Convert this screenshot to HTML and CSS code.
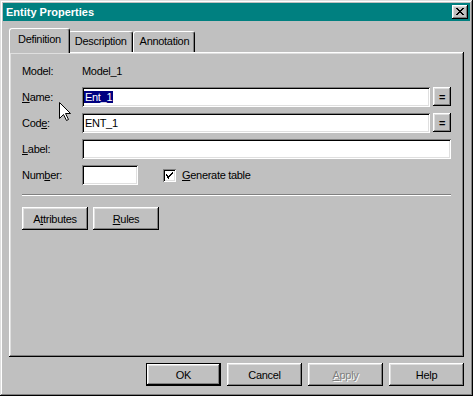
FILE: index.html
```html
<!DOCTYPE html>
<html lang="en">
<head>
  <meta charset="UTF-8" />
  <title>Entity Properties</title>
  <link rel="stylesheet" href="styles.css">
</head>
<body>
  <div class="window">
    <div class="titlebar">
      <span class="title">Entity Properties</span>
      <div class="close-btn">
        <svg width="8" height="7" viewBox="0 0 8 7" shape-rendering="crispEdges">
          <path d="M0 0h2v1h-2zM6 0h2v1h-2zM1 1h2v1h-2zM5 1h2v1h-2zM2 2h4v1h-4zM3 3h2v1h-2zM2 4h4v1h-4zM1 5h2v1h-2zM5 5h2v1h-2zM0 6h2v1h-2zM6 6h2v1h-2z" fill="#000"/>
        </svg>
      </div>
    </div>

    <div class="content">
      <div class="tabs">
        <div class="tab active">Definition</div>
        <div class="tab">Description</div>
        <div class="tab">Annotation</div>
      </div>

      <div class="panel">
        <div class="form">
          <div class="row model-row">
            <span class="label">Model:</span>
            <span class="value">Model_1</span>
          </div>
          <div class="row">
            <span class="label"><u>N</u>ame:</span>
            <div class="field grow"><span class="sel">Ent_1</span></div>
            <button class="btn eq">=</button>
          </div>
          <div class="row">
            <span class="label">Cod<u>e</u>:</span>
            <div class="field grow">ENT_1</div>
            <button class="btn eq">=</button>
          </div>
          <div class="row">
            <span class="label"><u>L</u>abel:</span>
            <div class="field grow"></div>
          </div>
          <div class="row">
            <span class="label">Num<u>b</u>er:</span>
            <div class="field number"></div>
            <label class="check">
              <span class="box">
                <svg width="7" height="7" viewBox="0 0 7 7" shape-rendering="crispEdges">
                  <path d="M6 0h1v1h-1zM5 1h2v1h-2zM4 2h2v1h-2zM0 2h1v1h-1zM0 3h2v1h-2zM3 3h2v1h-2zM1 4h3v1h-3zM1 5h2v1h-2zM2 6h1v1h-1z" fill="#000"/>
                </svg>
              </span>
              <span><u>G</u>enerate table</span>
            </label>
          </div>
        </div>

        <div class="separator"></div>

        <div class="panel-buttons">
          <button class="btn wide">A<u>t</u>tributes</button>
          <button class="btn wide"><u>R</u>ules</button>
        </div>
      </div>

      <div class="footer">
        <button class="btn action default">OK</button>
        <button class="btn action">Cancel</button>
        <button class="btn action disabled"><u>A</u>pply</button>
        <button class="btn action">Help</button>
      </div>
    </div>

    <svg class="cursor" width="13" height="20" viewBox="0 0 13 20">
      <path d="M0.5 0.5 L0.5 16.5 L4.5 12.5 L7.5 18.5 L9.5 17.5 L6.5 11.5 L11.5 11.5 Z" fill="#fff" stroke="#000" stroke-width="1"/>
    </svg>
  </div>
</body>
</html>
```

FILE: styles.css
```css
body {
  margin: 0;
  font-family: "Liberation Sans", Arial, sans-serif;
  font-size: 11px;
  letter-spacing: -0.3px;
  color: #000;
  background-color: #c0c0c0;
}

.window {
  position: relative;
  width: 473px;
  height: 396px;
  box-sizing: border-box;
  padding: 3px;
  background-color: #c0c0c0;
  box-shadow: inset -1px -1px #000, inset 1px 1px #dfdfdf, inset -2px -2px #808080, inset 2px 2px #fff;
  display: flex;
  flex-direction: column;
}

.titlebar {
  height: 18px;
  background-color: #008080;
  color: #fff;
  display: flex;
  align-items: center;
  justify-content: space-between;
  padding: 0 2px 0 3px;
}

.title {
  font-weight: bold;
  letter-spacing: 0;
}

.close-btn {
  width: 16px;
  height: 14px;
  background-color: #c0c0c0;
  box-shadow: inset -1px -1px #000, inset 1px 1px #fff, inset -2px -2px #808080, inset 2px 2px #dfdfdf;
  display: flex;
  align-items: center;
  justify-content: center;
}

.close-btn svg {
  margin-left: -1px;
  margin-top: -1px;
}

.content {
  flex: 1;
  padding: 7px 6px 0 6px;
  display: flex;
  flex-direction: column;
}

.tabs {
  display: flex;
  align-items: flex-end;
  height: 24px;
  padding-left: 2px;
}

.tab {
  height: 21px;
  box-sizing: border-box;
  padding: 0 5px 2px 6px;
  border-top: 1px solid #fff;
  border-left: 1px solid #fff;
  border-right: 1px solid #000;
  border-radius: 3px 3px 0 0;
  box-shadow: inset -1px 0 #808080;
  display: flex;
  align-items: center;
}

.tab.active {
  position: relative;
  z-index: 2;
  height: 25px;
  margin: 0 -2px -1px -2px;
  padding: 0 8px 4px 8px;
  background-color: #c0c0c0;
}

.panel {
  height: 305px;
  box-sizing: border-box;
  padding: 8px 13px 0 13px;
  box-shadow: inset -1px -1px #000, inset 1px 1px #fff, inset -2px -2px #808080, inset 2px 2px #dfdfdf;
}

.form {
  display: flex;
  flex-direction: column;
  gap: 6px;
}

.row {
  display: flex;
  align-items: flex-start;
  height: 20px;
}

.model-row {
  height: 21px;
  align-items: center;
}

.label {
  width: 60px;
  line-height: 20px;
}

.field {
  height: 20px;
  box-sizing: border-box;
  padding: 3px 3px 0 3px;
  background-color: #fff;
  line-height: 14px;
  box-shadow: inset 1px 1px #808080, inset -1px -1px #fff, inset 2px 2px #000, inset -2px -2px #dfdfdf;
}

.field.grow {
  flex: 1;
}

.field.number {
  width: 56px;
}

.sel {
  background-color: #000080;
  color: #fff;
  margin-left: -1px;
  padding: 0 1px;
}

.btn {
  background-color: #c0c0c0;
  border: none;
  padding: 0;
  font: inherit;
  letter-spacing: inherit;
  color: #000;
  box-shadow: inset -1px -1px #000, inset 1px 1px #fff, inset -2px -2px #808080, inset 2px 2px #dfdfdf;
}

.btn.eq {
  width: 18px;
  height: 19px;
  margin-left: 3px;
  font-weight: bold;
}

.check {
  display: flex;
  align-items: center;
  gap: 6px;
  margin-left: 25px;
  height: 20px;
}

.box {
  width: 13px;
  height: 13px;
  box-sizing: border-box;
  background-color: #fff;
  box-shadow: inset 1px 1px #808080, inset -1px -1px #fff, inset 2px 2px #000, inset -2px -2px #dfdfdf;
  display: flex;
  align-items: center;
  justify-content: center;
}

.separator {
  margin-top: 9px;
  height: 1px;
  background-color: #808080;
  border-bottom: 1px solid #fff;
}

.panel-buttons {
  display: flex;
  gap: 5px;
  margin-top: 11px;
}

.btn.wide {
  width: 66px;
  height: 23px;
}

.footer {
  display: flex;
  justify-content: flex-end;
  gap: 6px;
  margin-top: 6px;
}

.btn.action {
  width: 75px;
  height: 23px;
}

.btn.default {
  box-shadow: inset 0 0 0 1px #000, inset -2px -2px #000, inset 2px 2px #fff, inset -3px -3px #808080, inset 3px 3px #dfdfdf;
}

.btn.disabled {
  color: #808080;
  text-shadow: 1px 1px #fff;
}

.cursor {
  position: absolute;
  left: 59px;
  top: 102px;
}
```
